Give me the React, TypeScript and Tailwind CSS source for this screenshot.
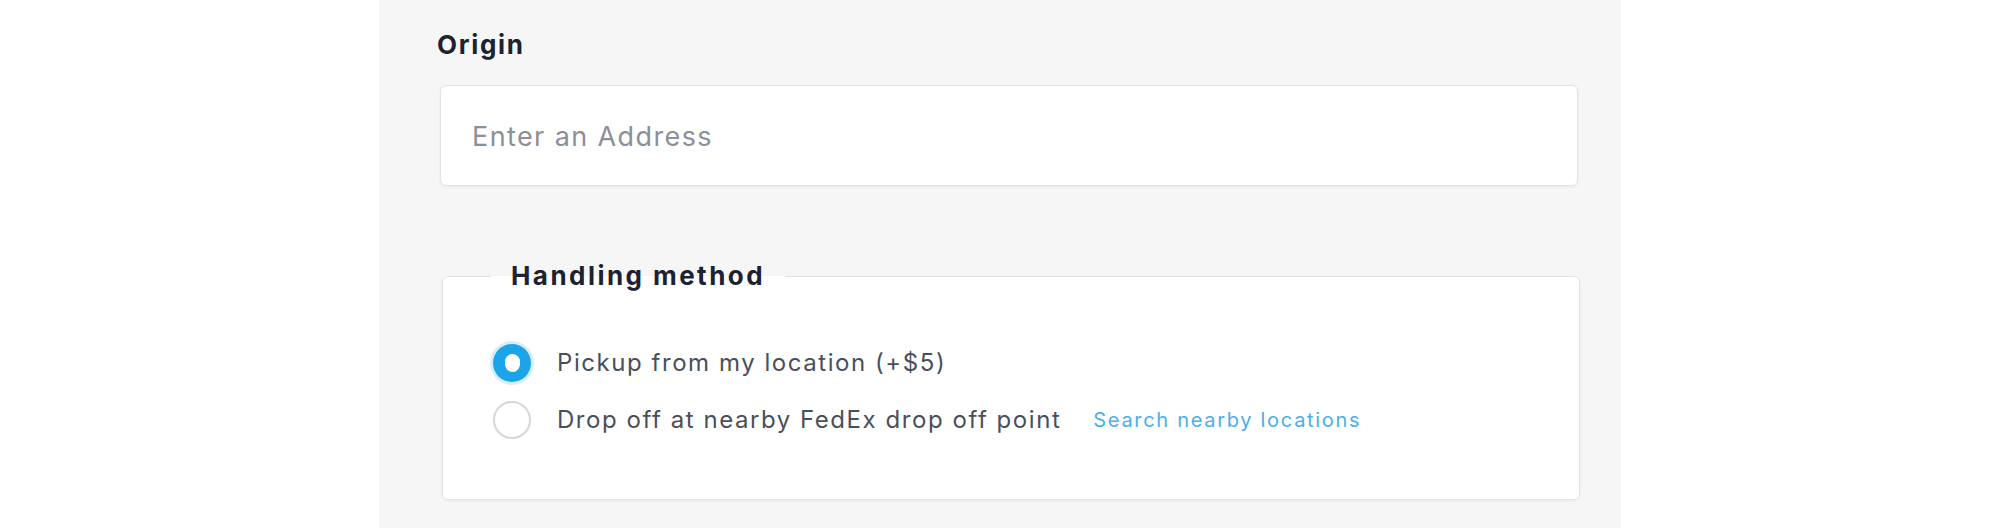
import React from "react";

export default function App() {
  return (
    <div className="min-h-[528px] bg-white flex justify-center font-['Inter',sans-serif]">
      <div className="w-[1242px] min-h-[528px] bg-[#f6f6f6] pl-[61px] pt-[25px]">
        <label className="block font-bold text-[26px] tracking-[1.7px] leading-[40px] text-[#1b2232] -ml-[3px]">Origin</label>
        <div className="mt-[20px] w-[1138px] h-[101px] bg-white border border-[#e2e3e7] rounded-[6px] shadow-[0_1px_3px_rgba(0,0,0,0.06)] flex items-center pl-[31px] pt-[4px] text-[27px] tracking-[1.4px] text-[#8b8f97]">
          Enter an Address
        </div>
        <fieldset className="mt-[74px] ml-[2px] w-[1138px] h-[240px] bg-white border border-[#e2e3e7] rounded-[6px] shadow-[0_1px_3px_rgba(0,0,0,0.06)] pl-[48px] pr-[40px]">
          <legend className="px-[20px] font-bold text-[26px] tracking-[2.45px] leading-[32px] text-[#1b2232]">Handling method</legend>
          <div className="flex flex-col gap-[19px] pt-[52px] pl-[2px]">
            <label className="flex items-center gap-[26px] h-[38px]">
              <span className="w-[38px] h-[38px] shrink-0 rounded-full bg-[#1ca3e8] flex items-center justify-center shadow-[0_0_0_3px_rgba(28,163,232,0.18)]">
                <span className="w-[15px] h-[18px] rounded-full bg-white" />
              </span>
              <span className="text-[24px] tracking-[1.55px] text-[#4a4f5c]">Pickup from my location (+$5)</span>
            </label>
            <label className="flex items-center gap-[26px] h-[38px]">
              <span className="w-[38px] h-[38px] shrink-0 rounded-full bg-white border-2 border-[#d4d6db]" />
              <span className="text-[24px] tracking-[1.55px] text-[#4a4f5c]">Drop off at nearby FedEx drop off point</span>
              <a className="ml-[6px] text-[20px] tracking-[1.7px] text-[#4aafe9]">Search nearby locations</a>
            </label>
          </div>
        </fieldset>
      </div>
    </div>
  );
}
